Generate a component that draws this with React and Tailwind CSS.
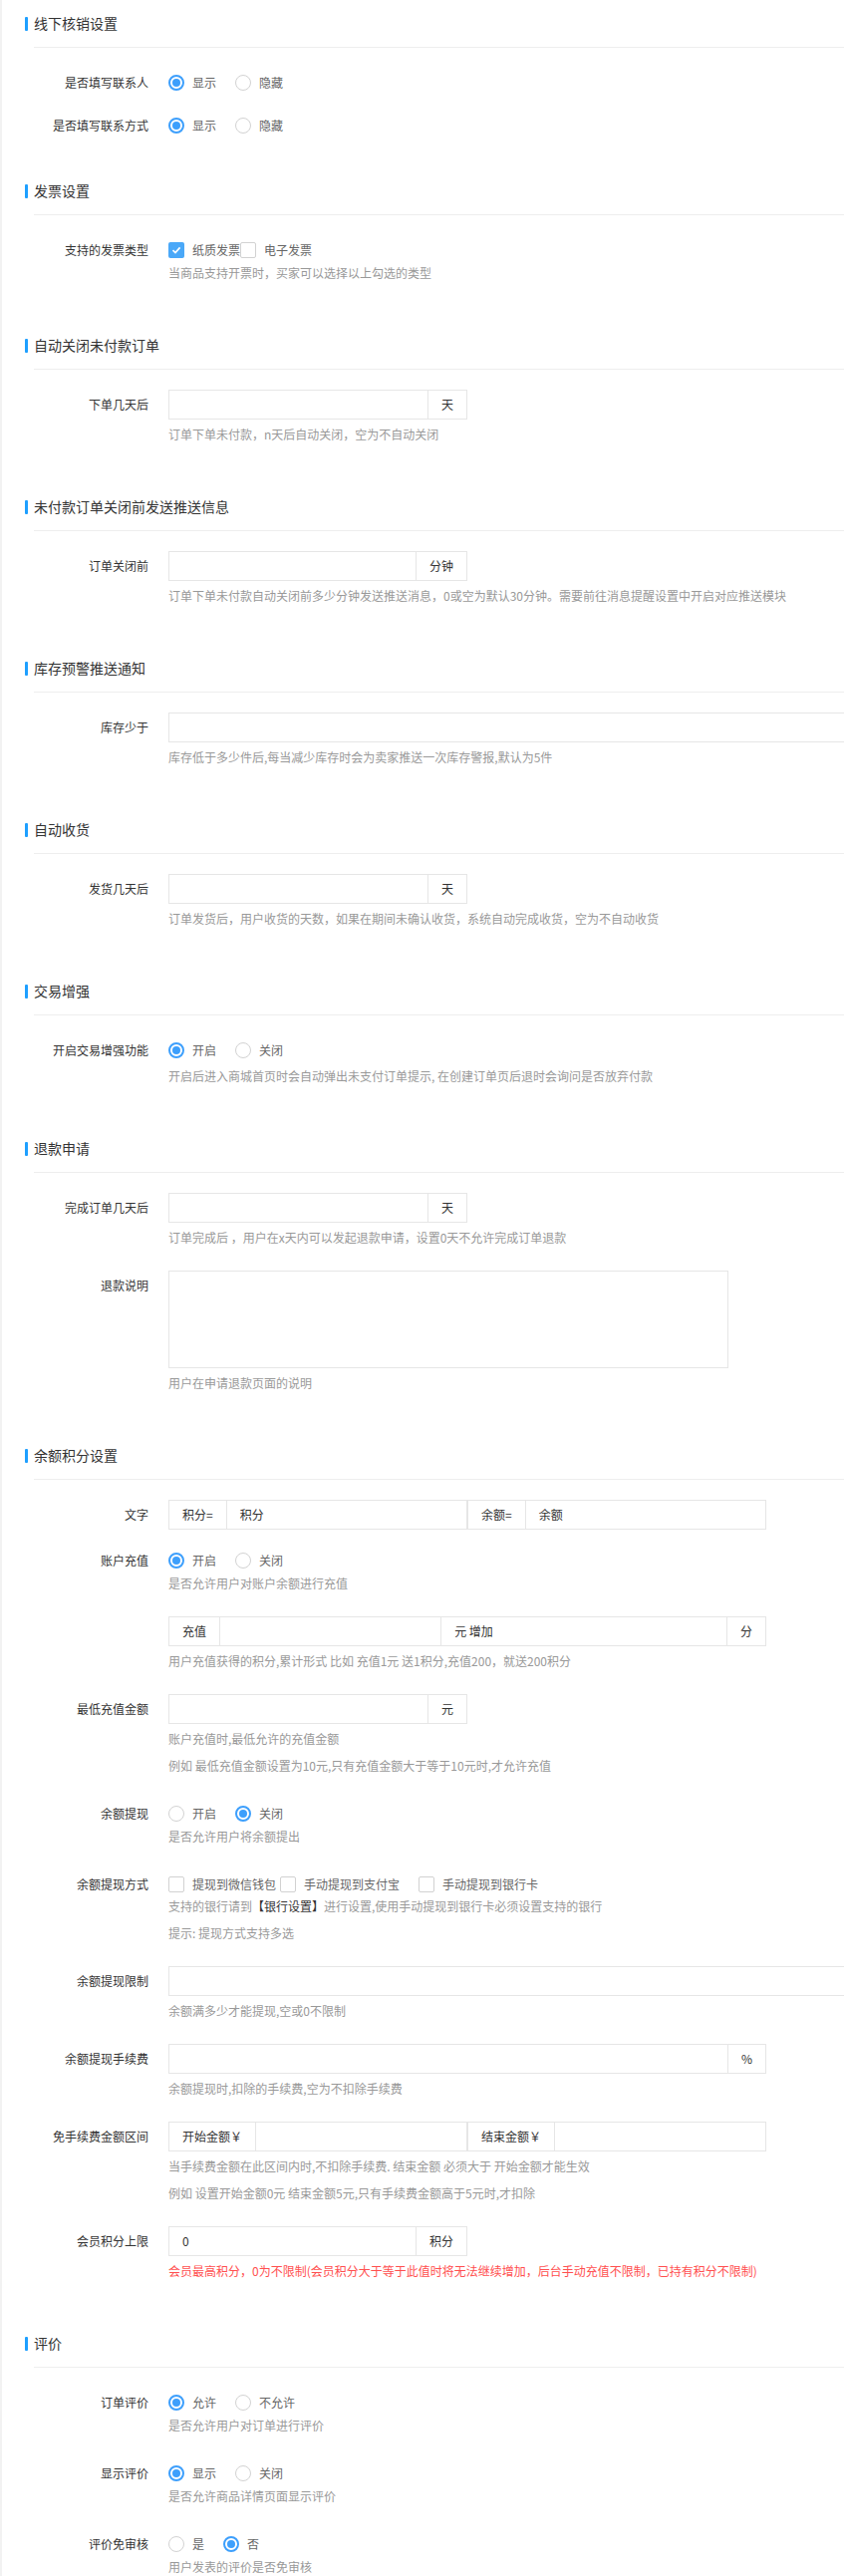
import React from "react";

const Section = ({ title, children, pb = "pb-[39px]" }) => (
  <div className={pb}>
    <div className="h-[47px] flex items-center pl-[23px]">
      <span className="w-[3px] h-[14px] bg-[#1e9fff] rounded-[1px]" />
      <span className="ml-[6px] text-[14px] text-[#333]">{title}</span>
    </div>
    <div className="ml-[32px] border-t border-[#eeeeee] pt-[20px]">{children}</div>
  </div>
);

const Item = ({ label, children, className = "mt-[23px]" }) => (
  <div className={`flex ${className}`}>
    <div className="w-[115px] shrink-0 h-[30px] leading-[30px] text-right text-[12px] text-[#333] whitespace-nowrap">
      {label}
    </div>
    <div className="ml-[20px] flex-1 min-w-0">{children}</div>
  </div>
);

const Hint = ({ children, className = "mt-[5px]", red = false }) => (
  <div
    className={`${className} h-[20px] leading-[20px] text-[12px] whitespace-nowrap ${
      red ? "text-[#ff5050]" : "text-[#999]"
    }`}
  >
    {children}
  </div>
);

const Radio = ({ checked, label }) => (
  <div className="flex items-center pr-[19px]">
    {checked ? (
      <span className="w-4 h-4 rounded-full border-2 border-[#3d9ffc] flex items-center justify-center">
        <span className="w-[8px] h-[8px] rounded-full bg-[#3d9ffc]" />
      </span>
    ) : (
      <span className="w-4 h-4 rounded-full border border-[#d2d2d2] bg-white" />
    )}
    <span className="ml-[8px] text-[12px] text-[#666]">{label}</span>
  </div>
);

const Radios = ({ items, value }) => (
  <div className="h-[30px] flex items-center">
    {items.map((it, i) => (
      <Radio key={it} label={it} checked={i === value} />
    ))}
  </div>
);

const Checkbox = ({ checked, label, mr = "" }) => (
  <div className={`flex items-center ${mr}`}>
    {checked ? (
      <span className="w-4 h-4 rounded-[2px] bg-[#4aa8f8] flex items-center justify-center">
        <svg width="10" height="10" viewBox="0 0 10 10" fill="none">
          <polyline points="1.5,5.2 4,7.6 8.6,2.4" stroke="#fff" strokeWidth="1.6" />
        </svg>
      </span>
    ) : (
      <span className="w-4 h-4 rounded-[2px] border border-[#d2d2d2] bg-white" />
    )}
    <span className="ml-[8px] text-[12px] text-[#666]">{label}</span>
  </div>
);

const Addon = ({ children, first = false }) => (
  <div
    className={`h-full flex items-center px-[13px] text-[12px] text-[#333] whitespace-nowrap ${
      first ? "border-r" : "border-l"
    } border-[#e6e6e6]`}
  >
    {children}
  </div>
);

const Field = ({ value = "" }) => (
  <div className="h-full flex-1 flex items-center px-[13px] text-[12px] text-[#333] min-w-0">{value}</div>
);

const Group = ({ children, w = "w-[300px]" }) => (
  <div className={`${w} h-[30px] border border-[#e6e6e6] bg-white flex items-stretch`}>{children}</div>
);

const Suffix = ({ unit, value }) => (
  <Group>
    <Field value={value} />
    <Addon>{unit}</Addon>
  </Group>
);

const Full = () => <div className="w-full h-[30px] border border-[#e6e6e6] bg-white" />;

export default function App() {
  return (
    <div className="w-full min-h-[2585px] bg-[#f2f2f2] overflow-hidden" style={{ fontFamily: '"Noto Sans CJK SC", "Noto Sans", sans-serif' }}>
      <div className="ml-[2px] w-[1100px] bg-white min-h-[2585px]">
        <Section title="线下核销设置" pb="pb-[27px]">
          <Item label="是否填写联系人" className="">
            <Radios items={["显示", "隐藏"]} value={0} />
          </Item>
          <Item label="是否填写联系方式" className="mt-[13px]">
            <Radios items={["显示", "隐藏"]} value={0} />
          </Item>
        </Section>

        <Section title="发票设置">
          <Item label="支持的发票类型" className="">
            <div className="h-[30px] flex items-center">
              <Checkbox checked label="纸质发票" />
              <Checkbox label="电子发票" />
            </div>
            <Hint className="mt-[-2px]">当商品支持开票时，买家可以选择以上勾选的类型</Hint>
          </Item>
        </Section>

        <Section title="自动关闭未付款订单">
          <Item label="下单几天后" className="">
            <Suffix unit="天" />
            <Hint>订单下单未付款，n天后自动关闭，空为不自动关闭</Hint>
          </Item>
        </Section>

        <Section title="未付款订单关闭前发送推送信息">
          <Item label="订单关闭前" className="">
            <Suffix unit="分钟" />
            <Hint>订单下单未付款自动关闭前多少分钟发送推送消息，0或空为默认30分钟。需要前往消息提醒设置中开启对应推送模块</Hint>
          </Item>
        </Section>

        <Section title="库存预警推送通知">
          <Item label="库存少于" className="">
            <Full />
            <Hint>库存低于多少件后,每当减少库存时会为卖家推送一次库存警报,默认为5件</Hint>
          </Item>
        </Section>

        <Section title="自动收货">
          <Item label="发货几天后" className="">
            <Suffix unit="天" />
            <Hint>订单发货后，用户收货的天数，如果在期间未确认收货，系统自动完成收货，空为不自动收货</Hint>
          </Item>
        </Section>

        <Section title="交易增强">
          <Item label="开启交易增强功能" className="">
            <Radios items={["开启", "关闭"]} value={0} />
            <Hint className="mt-[1px]">开启后进入商城首页时会自动弹出未支付订单提示, 在创建订单页后退时会询问是否放弃付款</Hint>
          </Item>
        </Section>

        <Section title="退款申请">
          <Item label="完成订单几天后" className="">
            <Suffix unit="天" />
            <Hint>订单完成后 ，用户在x天内可以发起退款申请，设置0天不允许完成订单退款</Hint>
          </Item>
          <Item label="退款说明">
            <textarea className="block w-[562px] h-[98px] border border-[#e6e6e6] resize-none outline-none" />
            <Hint>用户在申请退款页面的说明</Hint>
          </Item>
        </Section>

        <Section title="余额积分设置">
          <Item label="文字" className="">
            <div className="flex">
              <Group w="w-[300px]">
                <Addon first>积分=</Addon>
                <Field value="积分" />
              </Group>
              <Group w="w-[300px]">
                <Addon first>余额=</Addon>
                <Field value="余额" />
              </Group>
            </div>
          </Item>
          <Item label="账户充值" className="mt-[16px]">
            <Radios items={["开启", "关闭"]} value={0} />
            <Hint className="mt-[-2px]">是否允许用户对账户余额进行充值</Hint>
          </Item>
          <Item label="">
            <Group w="w-[600px]">
              <Addon first>充值</Addon>
              <Field />
              <Addon>元 增加</Addon>
              <Field />
              <Addon>分</Addon>
            </Group>
            <Hint>用户充值获得的积分,累计形式 比如 充值1元 送1积分,充值200，就送200积分</Hint>
          </Item>
          <Item label="最低充值金额">
            <Suffix unit="元" />
            <Hint>账户充值时,最低允许的充值金额</Hint>
            <Hint className="mt-[7px]">例如 最低充值金额设置为10元,只有充值金额大于等于10元时,才允许充值</Hint>
          </Item>
          <Item label="余额提现">
            <Radios items={["开启", "关闭"]} value={1} />
            <Hint className="mt-[-2px]">是否允许用户将余额提出</Hint>
          </Item>
          <Item label="余额提现方式">
            <div className="h-[30px] flex items-center">
              <Checkbox label="提现到微信钱包" mr="mr-[4px]" />
              <Checkbox label="手动提现到支付宝" mr="mr-[19px]" />
              <Checkbox label="手动提现到银行卡" />
            </div>
            <Hint className="mt-[-3px]">
              支持的银行请到<span className="text-[#333]">【银行设置】</span>进行设置,使用手动提现到银行卡必须设置支持的银行
            </Hint>
            <Hint className="mt-[7px]">提示: 提现方式支持多选</Hint>
          </Item>
          <Item label="余额提现限制">
            <Full />
            <Hint>余额满多少才能提现,空或0不限制</Hint>
          </Item>
          <Item label="余额提现手续费">
            <Group w="w-[600px]">
              <Field />
              <Addon>%</Addon>
            </Group>
            <Hint>余额提现时,扣除的手续费,空为不扣除手续费</Hint>
          </Item>
          <Item label="免手续费金额区间">
            <div className="flex">
              <Group w="w-[300px]">
                <Addon first>开始金额￥</Addon>
                <Field />
              </Group>
              <Group w="w-[300px]">
                <Addon first>结束金额￥</Addon>
                <Field />
              </Group>
            </div>
            <Hint>当手续费金额在此区间内时,不扣除手续费. 结束金额 必须大于 开始金额才能生效</Hint>
            <Hint className="mt-[7px]">例如 设置开始金额0元 结束金额5元,只有手续费金额高于5元时,才扣除</Hint>
          </Item>
          <Item label="会员积分上限">
            <Suffix unit="积分" value="0" />
            <Hint red>会员最高积分，0为不限制(会员积分大于等于此值时将无法继续增加，后台手动充值不限制，已持有积分不限制)</Hint>
          </Item>
        </Section>

        <Section title="评价" pb="pb-0">
          <Item label="订单评价" className="">
            <Radios items={["允许", "不允许"]} value={0} />
            <Hint className="mt-[-2px]">是否允许用户对订单进行评价</Hint>
          </Item>
          <Item label="显示评价">
            <Radios items={["显示", "关闭"]} value={0} />
            <Hint className="mt-[-2px]">是否允许商品详情页面显示评价</Hint>
          </Item>
          <Item label="评价免审核">
            <Radios items={["是", "否"]} value={1} />
            <Hint className="mt-[-2px]">用户发表的评价是否免审核</Hint>
          </Item>
        </Section>
      </div>
    </div>
  );
}
